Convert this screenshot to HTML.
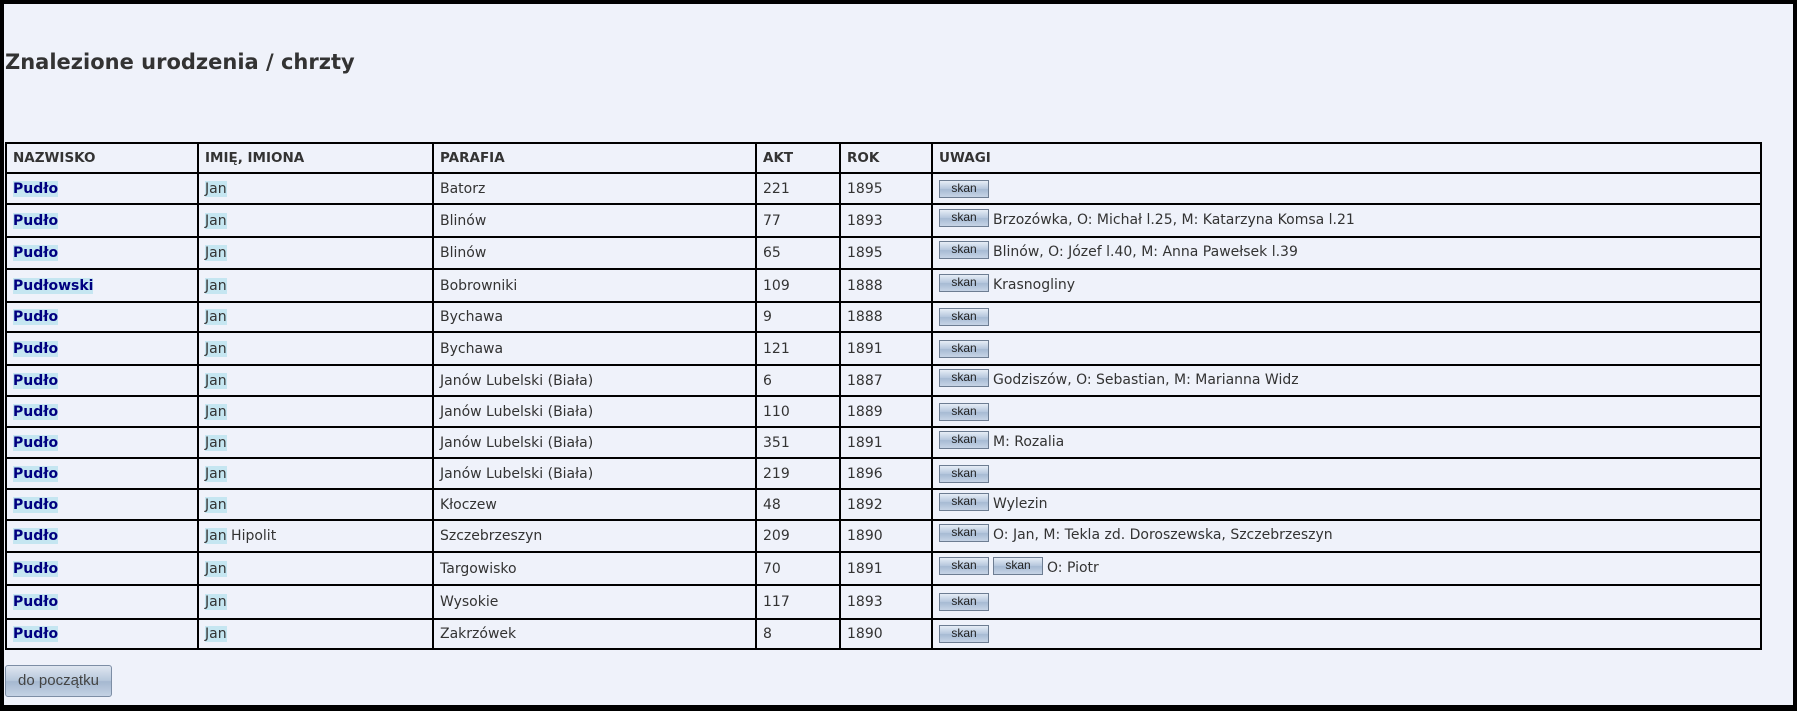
<!DOCTYPE html>
<html><head><meta charset="utf-8"><style>
html,body{margin:0;padding:0;}
body{width:1797px;height:711px;background:#000;overflow:hidden;font-family:"DejaVu Sans",Verdana,sans-serif;}
#frame{position:absolute;left:4px;top:4px;width:1789px;height:701px;background:#eff2fa;}
h1{position:absolute;left:1px;top:46px;margin:0;font-size:21px;font-weight:bold;color:#333;}
table{position:absolute;left:1px;top:138px;border-collapse:collapse;width:1757px;font-size:14px;color:#333;}
td,th{border:2px solid #000;padding:0 0 0 6px;text-align:left;vertical-align:middle;white-space:nowrap;}
th{font-weight:bold;font-size:13.5px;}
.n{color:#000080;font-weight:bold;background:#c5e6f1;}
.j{background:#c5e6f1;}
.s{display:inline-block;width:48px;height:16px;border:1px solid #6d7d92;background:linear-gradient(#e6edf6,#b4c6dc 50%,#a6bad3 52%,#c6d4e6);font:12px "Liberation Sans",sans-serif;color:#222;text-align:center;line-height:15px;vertical-align:top;margin-right:4px;position:relative;top:-3px;}
.s1{top:0;}
.b{position:absolute;left:1px;top:661px;width:107px;height:32px;border:1px solid #7d8ea5;border-radius:3px;background:linear-gradient(#dfe6f0,#b7c8dc 48%,#a5b8d0 52%,#c4d2e4);font:15px "Liberation Sans",sans-serif;color:#444;text-align:center;line-height:30px;box-sizing:border-box;}
</style></head><body><div id="frame">
<h1>Znalezione urodzenia / chrzty</h1>
<table>
<colgroup><col style="width:192px"><col style="width:235px"><col style="width:323px"><col style="width:84px"><col style="width:92px"><col></colgroup>
<tr style="height:30px"><th>NAZWISKO</th><th>IMIĘ, IMIONA</th><th>PARAFIA</th><th>AKT</th><th>ROK</th><th>UWAGI</th></tr>
<tr style="height:31px"><td><span class="n">Pudło</span></td><td><span class="j">Jan</span></td><td>Batorz</td><td>221</td><td>1895</td><td><span class="s s1">skan</span></td></tr>
<tr style="height:33px"><td><span class="n">Pudło</span></td><td><span class="j">Jan</span></td><td>Blinów</td><td>77</td><td>1893</td><td><span class="s">skan</span>Brzozówka, O: Michał l.25, M: Katarzyna Komsa l.21</td></tr>
<tr style="height:32px"><td><span class="n">Pudło</span></td><td><span class="j">Jan</span></td><td>Blinów</td><td>65</td><td>1895</td><td><span class="s">skan</span>Blinów, O: Józef l.40, M: Anna Pawełsek l.39</td></tr>
<tr style="height:33px"><td><span class="n">Pudłowski</span></td><td><span class="j">Jan</span></td><td>Bobrowniki</td><td>109</td><td>1888</td><td><span class="s">skan</span>Krasnogliny</td></tr>
<tr style="height:30px"><td><span class="n">Pudło</span></td><td><span class="j">Jan</span></td><td>Bychawa</td><td>9</td><td>1888</td><td><span class="s s1">skan</span></td></tr>
<tr style="height:33px"><td><span class="n">Pudło</span></td><td><span class="j">Jan</span></td><td>Bychawa</td><td>121</td><td>1891</td><td><span class="s s1">skan</span></td></tr>
<tr style="height:31px"><td><span class="n">Pudło</span></td><td><span class="j">Jan</span></td><td>Janów Lubelski (Biała)</td><td>6</td><td>1887</td><td><span class="s">skan</span>Godziszów, O: Sebastian, M: Marianna Widz</td></tr>
<tr style="height:31px"><td><span class="n">Pudło</span></td><td><span class="j">Jan</span></td><td>Janów Lubelski (Biała)</td><td>110</td><td>1889</td><td><span class="s s1">skan</span></td></tr>
<tr style="height:31px"><td><span class="n">Pudło</span></td><td><span class="j">Jan</span></td><td>Janów Lubelski (Biała)</td><td>351</td><td>1891</td><td><span class="s">skan</span>M: Rozalia</td></tr>
<tr style="height:31px"><td><span class="n">Pudło</span></td><td><span class="j">Jan</span></td><td>Janów Lubelski (Biała)</td><td>219</td><td>1896</td><td><span class="s s1">skan</span></td></tr>
<tr style="height:31px"><td><span class="n">Pudło</span></td><td><span class="j">Jan</span></td><td>Kłoczew</td><td>48</td><td>1892</td><td><span class="s">skan</span>Wylezin</td></tr>
<tr style="height:32px"><td><span class="n">Pudło</span></td><td><span class="j">Jan</span> Hipolit</td><td>Szczebrzeszyn</td><td>209</td><td>1890</td><td><span class="s">skan</span>O: Jan, M: Tekla zd. Doroszewska, Szczebrzeszyn</td></tr>
<tr style="height:33px"><td><span class="n">Pudło</span></td><td><span class="j">Jan</span></td><td>Targowisko</td><td>70</td><td>1891</td><td><span class="s">skan</span><span class="s">skan</span>O: Piotr</td></tr>
<tr style="height:34px"><td><span class="n">Pudło</span></td><td><span class="j">Jan</span></td><td>Wysokie</td><td>117</td><td>1893</td><td><span class="s s1">skan</span></td></tr>
<tr style="height:30px"><td><span class="n">Pudło</span></td><td><span class="j">Jan</span></td><td>Zakrzówek</td><td>8</td><td>1890</td><td><span class="s s1">skan</span></td></tr>
</table>
<div class="b">do początku</div>
</div></body></html>
